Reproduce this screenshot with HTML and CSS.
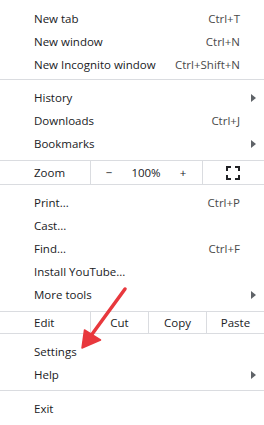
FILE: index.html
```html
<!DOCTYPE html>
<html lang="en">
<head>
  <meta charset="UTF-8" />
  <title>Menu</title>
  <link rel="stylesheet" href="styles.css">
</head>
<body>
  <div class="menu">
    <div class="group first">
      <div class="item"><span>New tab</span><span class="key">Ctrl+T</span></div>
      <div class="item"><span>New window</span><span class="key">Ctrl+N</span></div>
      <div class="item"><span>New Incognito window</span><span class="key">Ctrl+Shift+N</span></div>
    </div>

    <div class="group">
      <div class="item"><span>History</span><span class="sub"></span></div>
      <div class="item"><span>Downloads</span><span class="key">Ctrl+J</span></div>
      <div class="item"><span>Bookmarks</span><span class="sub"></span></div>
    </div>

    <div class="zoom-row">
      <div class="label">Zoom</div>
      <div class="zoom-ctrl">
        <span>&minus;</span>
        <span>100%</span>
        <span>+</span>
      </div>
      <div class="full">
        <svg width="14" height="14" viewBox="0 0 14 14">
          <path d="M1 5V1h4M9 1h4v4M13 9v4H9M5 13H1V9" fill="none" stroke="#202124" stroke-width="2"/>
        </svg>
      </div>
    </div>

    <div class="group">
      <div class="item"><span>Print...</span><span class="key">Ctrl+P</span></div>
      <div class="item"><span>Cast...</span></div>
      <div class="item"><span>Find...</span><span class="key">Ctrl+F</span></div>
      <div class="item"><span>Install YouTube...</span></div>
      <div class="item"><span>More tools</span><span class="sub"></span></div>
    </div>

    <div class="edit-row">
      <div class="label">Edit</div>
      <div class="cell">Cut</div>
      <div class="cell">Copy</div>
      <div class="cell">Paste</div>
    </div>

    <div class="group short">
      <div class="item"><span>Settings</span></div>
      <div class="item"><span>Help</span><span class="sub"></span></div>
    </div>

    <div class="group">
      <div class="item"><span>Exit</span></div>
    </div>

    <svg class="pointer" width="264" height="425" viewBox="0 0 264 425">
      <line x1="125" y1="289" x2="90" y2="337" stroke="#e8383d" stroke-width="3.5" stroke-linecap="round"/>
      <path d="M82 348 L84.5 330 L100.5 340 Z" fill="#e8383d" stroke="#e8383d" stroke-width="1.5" stroke-linejoin="round"/>
    </svg>
  </div>
</body>
</html>
```

FILE: styles.css
```css
body {
  margin: 0;
  background: white;
  font-family: "Open Sans", "Noto Sans", sans-serif;
  font-size: 11.5px;
  color: #202124;
}

.menu {
  position: relative;
  width: 264px;
  height: 425px;
  background: white;
}

.group {
  padding: 6px 0 5px;
  border-bottom: 1px solid #dadce0;
}

.group.first {
  padding: 7px 0 3px;
}

.group.short {
  padding-bottom: 4px;
}

.group:last-of-type {
  border-bottom: none;
}

.item {
  display: flex;
  align-items: center;
  justify-content: space-between;
  height: 23px;
  padding: 0 24px 0 34px;
}

.key {
  color: #4a4a4a;
}

.sub {
  width: 0;
  height: 0;
  margin-right: -16px;
  border-top: 4px solid transparent;
  border-bottom: 4px solid transparent;
  border-left: 5px solid #5f6368;
}

.zoom-row,
.edit-row {
  display: flex;
  border-bottom: 1px solid #dadce0;
}

.zoom-row {
  height: 23px;
}

.edit-row {
  height: 21px;
}

.label {
  width: 56px;
  padding-left: 34px;
  border-right: 1px solid #dadce0;
  display: flex;
  align-items: center;
}

.zoom-ctrl {
  width: 111px;
  display: grid;
  grid-template-columns: 36px 38px 36px;
  align-items: center;
  justify-items: center;
  border-right: 1px solid #dadce0;
}

.full {
  flex: 1;
  display: flex;
  align-items: center;
  justify-content: center;
  padding-right: 1px;
}

.full svg {
  display: block;
}

.cell {
  display: flex;
  align-items: center;
  justify-content: center;
  width: 57px;
  border-right: 1px solid #dadce0;
}

.cell:last-child {
  flex: 1;
  border-right: none;
}

.pointer {
  position: absolute;
  left: 0;
  top: 0;
  pointer-events: none;
}
```
